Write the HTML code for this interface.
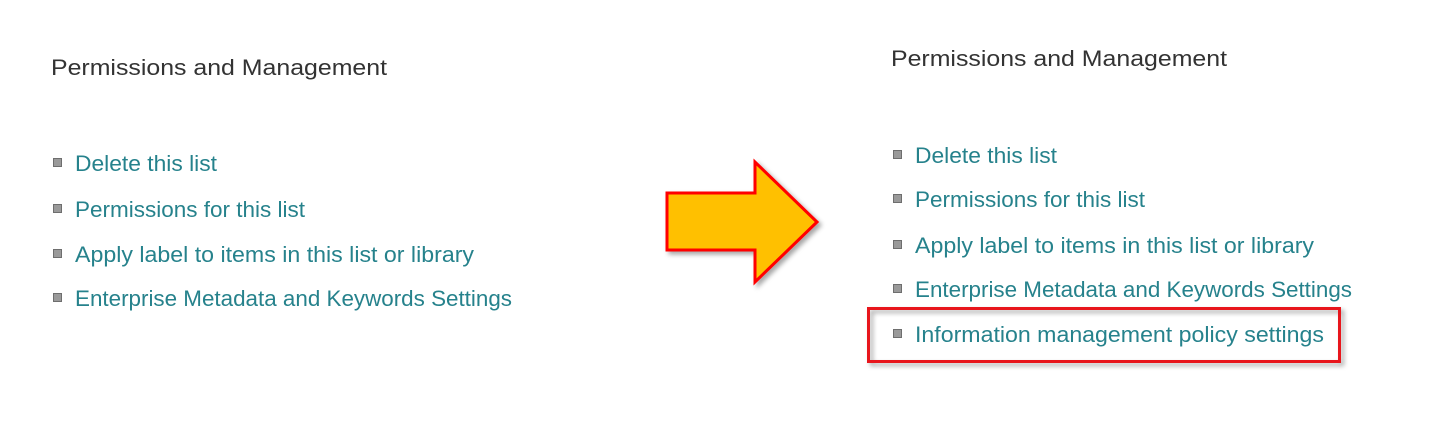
<!DOCTYPE html>
<html><head><meta charset="utf-8"><style>html,body{margin:0;padding:0;background:#fff;width:1453px;height:422px;overflow:hidden}</style></head>
<body>
<svg width="1453" height="422" xmlns="http://www.w3.org/2000/svg" font-family="Liberation Sans, sans-serif" font-size="22.5">
<defs>
<filter id="sh" x="-20%" y="-20%" width="150%" height="150%"><feDropShadow dx="3" dy="3" stdDeviation="2.5" flood-color="#000" flood-opacity="0.35"/></filter>
</defs>
<g fill="#333">
<text x="51" y="75" textLength="336" lengthAdjust="spacingAndGlyphs">Permissions and Management</text>
<text x="891" y="66" textLength="336" lengthAdjust="spacingAndGlyphs">Permissions and Management</text>
</g>
<g fill="#9a9a9a" stroke="#6e6e6e" stroke-width="1">
<rect x="53.5" y="158.5" width="8" height="8"/>
<rect x="53.5" y="204.5" width="8" height="8"/>
<rect x="53.5" y="249.5" width="8" height="8"/>
<rect x="53.5" y="293.5" width="8" height="8"/>
<rect x="893.5" y="150.5" width="8" height="8"/>
<rect x="893.5" y="194.5" width="8" height="8"/>
<rect x="893.5" y="240.5" width="8" height="8"/>
<rect x="893.5" y="284.5" width="8" height="8"/>
<rect x="893.5" y="329.5" width="8" height="8"/>
</g>
<g fill="#26828c">
<text x="75" y="171" textLength="142" lengthAdjust="spacingAndGlyphs">Delete this list</text>
<text x="75" y="217" textLength="230" lengthAdjust="spacingAndGlyphs">Permissions for this list</text>
<text x="75" y="262" textLength="399" lengthAdjust="spacingAndGlyphs">Apply label to items in this list or library</text>
<text x="75" y="306" textLength="437" lengthAdjust="spacingAndGlyphs">Enterprise Metadata and Keywords Settings</text>
<text x="915" y="163" textLength="142" lengthAdjust="spacingAndGlyphs">Delete this list</text>
<text x="915" y="207" textLength="230" lengthAdjust="spacingAndGlyphs">Permissions for this list</text>
<text x="915" y="253" textLength="399" lengthAdjust="spacingAndGlyphs">Apply label to items in this list or library</text>
<text x="915" y="297" textLength="437" lengthAdjust="spacingAndGlyphs">Enterprise Metadata and Keywords Settings</text>
<text x="915" y="342" textLength="409" lengthAdjust="spacingAndGlyphs">Information management policy settings</text>
</g>
<rect x="868.5" y="308.5" width="471" height="53" fill="none" stroke="#e8141c" stroke-width="3" filter="url(#sh)"/>
<polygon points="667,193 755,193 755,162 817,222 755,282 755,250 667,250" fill="#ffc000" stroke="#ff0000" stroke-width="3" stroke-linejoin="miter" filter="url(#sh)"/>
</svg>
</body></html>
